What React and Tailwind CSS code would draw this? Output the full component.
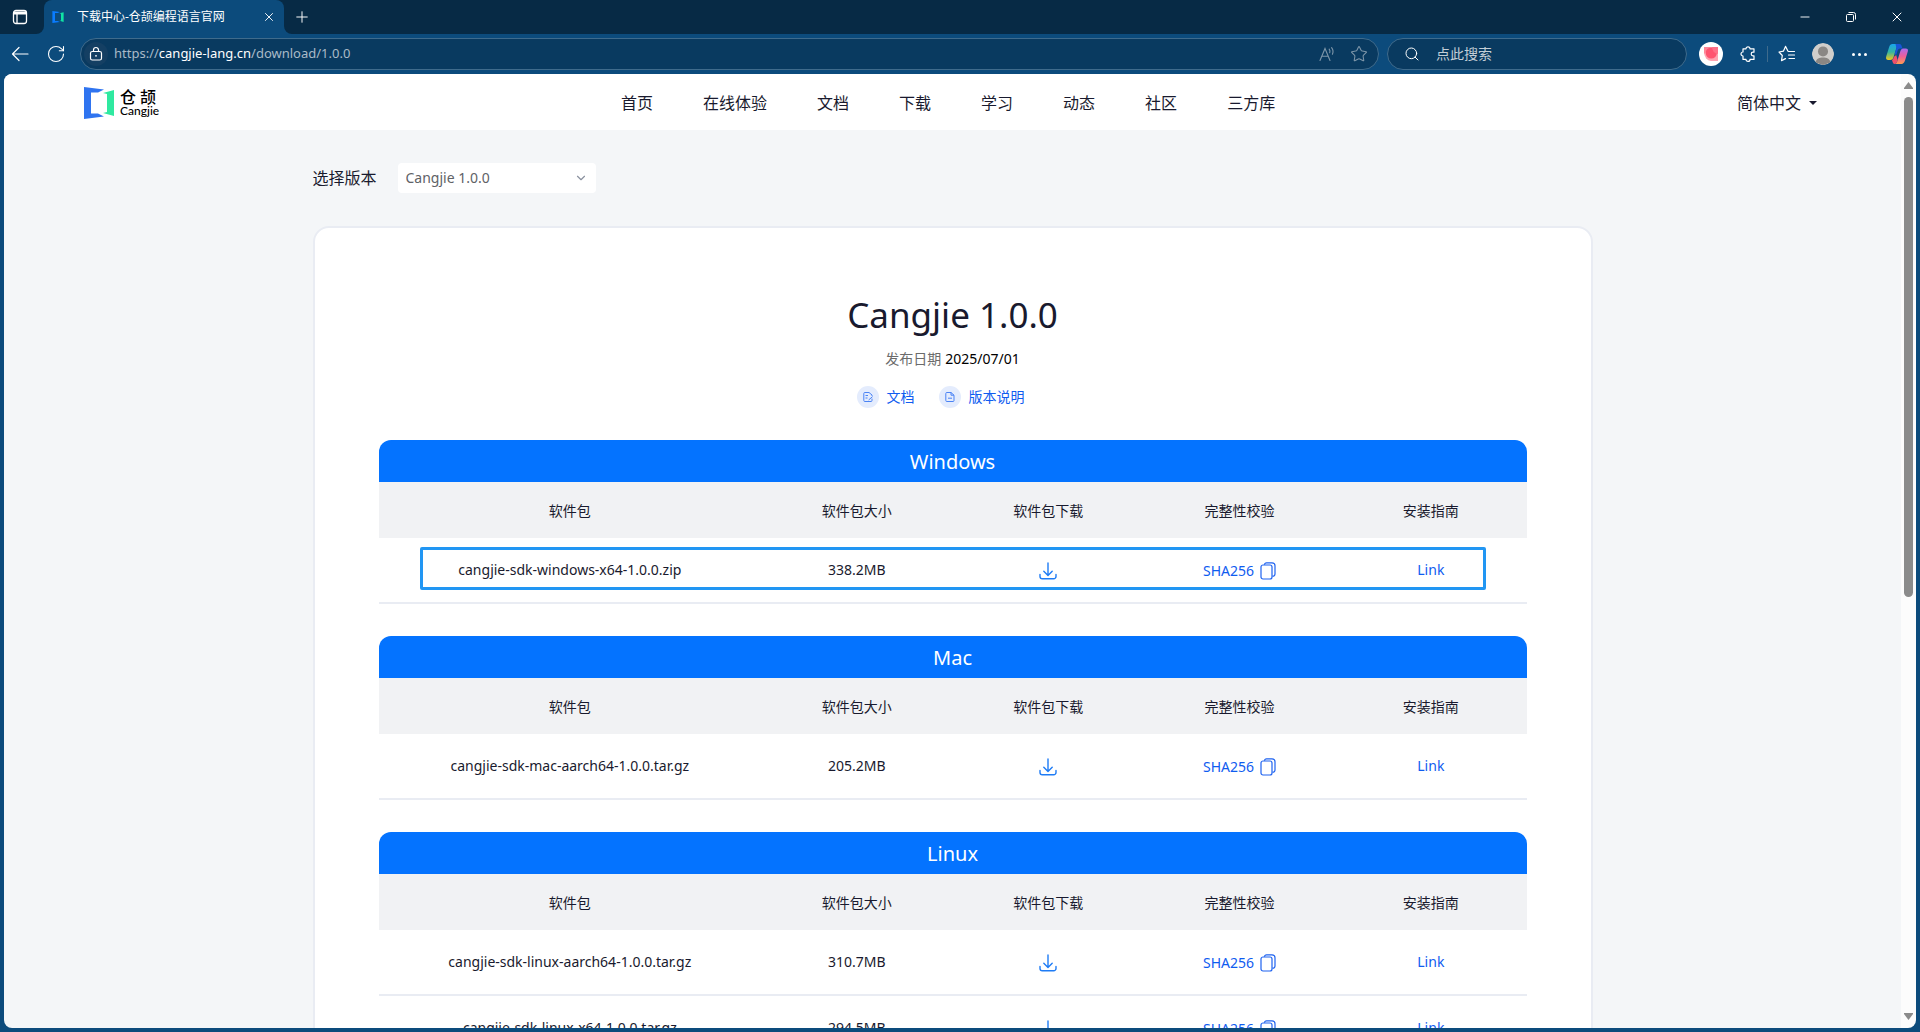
import { useState } from "react";
import { ChevronDown, Minus, Plus, RotateCw, Search, Star, X } from "lucide-react";

const navItems = ["首页", "在线体验", "文档", "下载", "学习", "动态", "社区", "三方库"];

const columns = ["软件包", "软件包大小", "软件包下载", "完整性校验", "安装指南"];

const platforms = [
  {
    name: "Windows",
    highlight: true,
    packages: [{ file: "cangjie-sdk-windows-x64-1.0.0.zip", size: "338.2MB" }],
  },
  {
    name: "Mac",
    packages: [{ file: "cangjie-sdk-mac-aarch64-1.0.0.tar.gz", size: "205.2MB" }],
  },
  {
    name: "Linux",
    packages: [
      { file: "cangjie-sdk-linux-aarch64-1.0.0.tar.gz", size: "310.7MB" },
      { file: "cangjie-sdk-linux-x64-1.0.0.tar.gz", size: "294.5MB" },
    ],
  },
];

function LogoMark({ className, blue = "#2f74f0", green = "#2fe9a0" }) {
  return (
    <svg viewBox="0 0 30 32" className={className} aria-hidden="true">
      <path d="M0 0 L20 2.4 L14 5.4 L7 5.4 L7 26.6 L14 26.6 L20 29.6 L0 32 Z" fill={blue} />
      <path d="M30 3 L30 29 L19 26 L23 25 L23 7 L19 6 Z" fill={green} />
    </svg>
  );
}

function TabActionsIcon() {
  return (
    <svg viewBox="0 0 16 16" className="size-4" fill="none" stroke="currentColor" strokeWidth="1.3" aria-hidden="true">
      <rect x="1.5" y="1.5" width="13" height="13" rx="2.5" />
      <path d="M2 4 H14" strokeWidth="3" />
      <path d="M5 4 V14.5" />
    </svg>
  );
}

function BackIcon() {
  return (
    <svg viewBox="0 0 18 18" className="size-[18px]" fill="none" stroke="currentColor" strokeWidth="1.2" strokeLinecap="round" strokeLinejoin="round" aria-hidden="true">
      <path d="M17 9 H1.5 M8 2.5 L1.5 9 L8 15.5" />
    </svg>
  );
}

function LockIcon() {
  return (
    <svg viewBox="0 0 16 16" className="size-4" fill="none" stroke="currentColor" strokeWidth="1.2" aria-hidden="true">
      <rect x="2.5" y="5.5" width="11" height="8.5" rx="1.8" />
      <path d="M5.5 5.5 V4 a2.5 2.5 0 0 1 5 0 V5.5" />
      <circle cx="8" cy="9.8" r="0.9" fill="currentColor" stroke="none" />
    </svg>
  );
}

function ReadAloudIcon() {
  return (
    <svg viewBox="0 0 18 18" className="size-[18px]" fill="none" stroke="currentColor" strokeWidth="1.1" strokeLinecap="round" aria-hidden="true">
      <path d="M2 15.5 L7 3.5 L12 15.5 M3.8 11.2 H10.2" />
      <path d="M11.2 4.2 q1.3 1.6 0.5 3.6 M13.6 2.6 q2.4 3 0.8 6.6" />
    </svg>
  );
}

function PuzzleIcon() {
  return (
    <svg viewBox="0 0 18 18" className="size-[18px]" fill="none" stroke="currentColor" strokeWidth="1.2" strokeLinejoin="round" aria-hidden="true">
      <path d="M4 3.8 H7 a2 2 0 0 1 4 0 H15 V7.2 H14 a1.8 1.8 0 0 0 0 3.6 H15 V14.4 H11 a2 2 0 0 1 -4 0 H4 V11 a2 2 0 0 1 0 -4 Z" />
    </svg>
  );
}

function FavoritesIcon() {
  return (
    <svg viewBox="0 0 18 18" className="size-[18px]" fill="none" stroke="currentColor" strokeWidth="1.2" strokeLinecap="round" strokeLinejoin="round" aria-hidden="true">
      <path d="M10 6.2 L7.5 1.4 L5.4 6.2 L1 7 L4.3 10.5 L3.5 15.6 L7.5 13.6" />
      <path d="M10.5 6.5 H16.5 M10.5 10 H16.5 M11 13.5 H16.5" />
    </svg>
  );
}

function PinkExtensionIcon() {
  return (
    <svg viewBox="0 0 24 24" className="size-6" aria-hidden="true">
      <circle cx="12" cy="12" r="12" fill="#fff" />
      <path d="M5 5 H19 V19 H12 A7 9 0 0 1 5 10 Z" fill="#ffa3b1" />
      <path d="M5 5 H12 L5 12 Z" fill="#ff8698" />
      <circle cx="12.3" cy="11" r="5.6" fill="#ff5470" />
      <path d="M13 5 H19 V12 A7 7 0 0 1 13 5 Z" fill="#ff7088" />
    </svg>
  );
}

function AvatarIcon() {
  return (
    <svg viewBox="0 0 22 22" className="size-[22px] rounded-full" aria-hidden="true">
      <circle cx="11" cy="11" r="11" fill="#d0cecb" />
      <circle cx="11" cy="8.4" r="5" fill="#8a8784" />
      <path d="M3.5 19.5 C4.5 15.5 7.4 14.6 11 14.6 C14.6 14.6 17.5 15.5 18.5 19.5 L11 22 Z" fill="#8a8784" />
    </svg>
  );
}

function CopilotIcon() {
  return (
    <svg viewBox="0 0 24 24" className="size-6" aria-hidden="true">
      <defs>
        <linearGradient id="copilotLeft" x1="0" y1="0" x2="0" y2="1">
          <stop offset="0" stopColor="#18a5ee" />
          <stop offset="0.5" stopColor="#35b5a0" />
          <stop offset="1" stopColor="#f2c81a" />
        </linearGradient>
        <linearGradient id="copilotRight" x1="0" y1="0" x2="0" y2="1">
          <stop offset="0" stopColor="#a96bf0" />
          <stop offset="0.5" stopColor="#ee5e9a" />
          <stop offset="1" stopColor="#ff9a52" />
        </linearGradient>
      </defs>
      <path d="M7.5 2 H14 C12.5 2.4 12 4 11.4 6 L8.6 15 C7.8 17.4 6.8 18 5 18 H3.2 C1.4 18 0.6 16.6 1.2 14.6 L4 5.4 C4.8 3 5.8 2 7.5 2 Z" fill="url(#copilotLeft)" />
      <path d="M10.5 2 H14.4 C16 2 16.4 3 16.8 4.4 L17.4 6.4 H15.2 C13.6 6.4 13 7.4 12.5 9 L11.2 13 L9.6 12 L11.4 6 Z" fill="#1755d8" />
      <path d="M16.5 22 H10 C11.5 21.6 12 20 12.6 18 L15.4 9 C16.2 6.8 17.2 6.4 19 6.4 H20.8 C22.6 6.4 23.4 7.6 22.8 9.6 L20 18.6 C19.2 21 18.2 22 16.5 22 Z" fill="url(#copilotRight)" />
      <path d="M7 18 C8 17.6 8.6 16 9 14.8 L11.2 13 L12.6 18 C12 20 11.4 22 9.6 22 C8.2 22 7.8 20.6 7 18 Z" fill="#f0506a" />
    </svg>
  );
}

function RestoreIcon() {
  return (
    <svg viewBox="0 0 12 12" className="size-3" fill="none" stroke="currentColor" aria-hidden="true">
      <rect x="1.5" y="3.5" width="7" height="7" rx="1" />
      <path d="M3.5 1.5 H8.5 a2 2 0 0 1 2 2 V8.5" />
    </svg>
  );
}

function DownloadIcon() {
  return (
    <svg viewBox="0 0 18 18" className="size-[18px]" fill="none" stroke="#1f7cf5" strokeWidth="1.4" strokeLinecap="round" strokeLinejoin="round" aria-hidden="true">
      <path d="M9 1 V13 M4.8 9.2 L9 13.4 L13.2 9.2" />
      <path d="M1 12.5 V14.5 a2.3 2.3 0 0 0 2.3 2.3 H14.7 a2.3 2.3 0 0 0 2.3 -2.3 V12.5" />
    </svg>
  );
}

function CopyIcon() {
  return (
    <svg viewBox="0 0 16 18" className="h-[18px] w-4" fill="none" stroke="#1f63f0" strokeWidth="1.2" strokeLinejoin="round" aria-hidden="true">
      <rect x="1" y="3" width="11" height="14" rx="2" />
      <path d="M4.5 2.8 a2 2 0 0 1 2 -2 H12 a3 3 0 0 1 3 3 V12 a2 2 0 0 1 -2.6 2" />
    </svg>
  );
}

function DocIcon({ edit }) {
  return (
    <span className="flex size-[22px] items-center justify-center rounded-full bg-[#e4ecfd]">
      <svg viewBox="0 0 12 12" className="size-3" fill="none" stroke="#4a83f5" strokeLinejoin="round" aria-hidden="true">
        {edit ? (
          <path d="M10 7.6 V9.5 a1 1 0 0 1 -1 1 H2.8 a1 1 0 0 1 -1 -1 V2.5 a1 1 0 0 1 1 -1 H7 L10 4 V5 M3.5 4.5 H6 M3.5 7 H5.5 M6.6 9 L10.6 5.6" />
        ) : (
          <path d="M7 1.5 H2.8 a1 1 0 0 0 -1 1 V9.5 a1 1 0 0 0 1 1 H9 a1 1 0 0 0 1 -1 V4.2 L7 1.5 V4.2 H10 M4 7.2 H8" />
        )}
      </svg>
    </span>
  );
}

function TitleBar() {
  return (
    <div className="flex h-[34px] items-stretch text-white">
      <div className="flex w-11 items-center rounded-br-lg bg-[#072a45] pl-3">
        <button type="button" aria-label="标签操作菜单">
          <TabActionsIcon />
        </button>
      </div>
      {/* The dark corner behind the tab keeps its top edge rounded */}
      <div className="bg-linear-to-b from-[#072a45] from-50% to-transparent to-50%">
        <div className="flex h-full w-60 items-center gap-[13px] rounded-t-lg bg-[#0c4b7c] pr-2 pl-2">
          <LogoMark className="h-3 w-3" blue="#0a7cff" green="#10e3a4" />
          <span className="flex-1 whitespace-nowrap text-xs">下载中心-仓颉编程语言官网</span>
          <button type="button" aria-label="关闭标签页">
            <X className="size-3.5" strokeWidth={1.6} />
          </button>
        </div>
      </div>
      <div className="flex flex-1 items-stretch rounded-bl-lg bg-[#072a45]">
        <button type="button" aria-label="新建标签页" className="flex w-9 items-center justify-center">
          <Plus className="size-[18px]" strokeWidth={1.3} />
        </button>
        <div className="ml-auto flex items-center">
          <button type="button" aria-label="最小化" className="flex w-[46px] justify-center">
            <Minus className="size-3.5" strokeWidth={1.6} />
          </button>
          <button type="button" aria-label="还原" className="flex w-[46px] justify-center">
            <RestoreIcon />
          </button>
          <button type="button" aria-label="关闭" className="flex w-[46px] justify-center">
            <X className="size-4" strokeWidth={1.5} />
          </button>
        </div>
      </div>
    </div>
  );
}

function Toolbar() {
  return (
    <div className="flex h-10 items-center pr-3 pl-[11px] text-white">
      <button type="button" aria-label="返回">
        <BackIcon />
      </button>
      <button type="button" aria-label="刷新" className="ml-[17px]">
        <RotateCw className="size-5" strokeWidth={1.3} />
      </button>

      {/* Address bar */}
      <div className="ml-3.5 flex h-8 flex-1 items-center rounded-full border border-[#3f6b8c] bg-[#093a60] pr-2.5 pl-[3px]">
        <span className="flex size-6 items-center justify-center rounded-full bg-[#143f63]">
          <LockIcon />
        </span>
        <a href="https://cangjie-lang.cn/download/1.0.0" className="ml-1.5 flex-1 text-[13px] text-[#a9bac8]">
          https://<span className="text-white">cangjie-lang.cn</span>/download/1.0.0
        </a>
        <div className="flex items-center gap-3.5 text-[#7e96a9]">
          <button type="button" aria-label="大声朗读">
            <ReadAloudIcon />
          </button>
          <button type="button" aria-label="收藏">
            <Star className="size-[18px]" strokeWidth={1.4} />
          </button>
        </div>
      </div>

      {/* Search box */}
      <label className="ml-2 flex h-8 w-[300px] items-center gap-4 rounded-full border border-[#3f6b8c] bg-[#093a60] px-4">
        <Search className="size-4 shrink-0" strokeWidth={1.5} />
        <input
          type="text"
          placeholder="点此搜索"
          aria-label="点此搜索"
          className="w-full bg-transparent text-sm placeholder-[#c3ced7] outline-none"
        />
      </label>

      <div className="-mr-px ml-3 flex items-center">
        <button type="button" aria-label="扩展程序">
          <PinkExtensionIcon />
        </button>
        <button type="button" aria-label="扩展" className="ml-4">
          <PuzzleIcon />
        </button>
        <span className="ml-2.5 h-4 w-px bg-[#3f6b8c]" />
        <button type="button" aria-label="收藏夹" className="ml-2.5">
          <FavoritesIcon />
        </button>
        <button type="button" aria-label="个人资料" className="ml-4">
          <AvatarIcon />
        </button>
        <button type="button" aria-label="设置及其他" className="ml-[18px] flex gap-[3px]">
          <span className="size-[3px] rounded-full bg-white" />
          <span className="size-[3px] rounded-full bg-white" />
          <span className="size-[3px] rounded-full bg-white" />
        </button>
        <button type="button" aria-label="Copilot" className="ml-[18px]">
          <CopilotIcon />
        </button>
      </div>
    </div>
  );
}

function SiteHeader() {
  return (
    <header className="flex h-14 items-center justify-between bg-white pt-px pr-[84px] pl-20 text-base text-[#191a2e]">
      <a href="#home" className="flex items-center gap-1.5">
        <LogoMark className="h-8 w-[30px]" />
        <span className="flex flex-col text-black">
          <span className="flex gap-1 text-base leading-4 font-medium">
            <span>仓</span>
            <span>颉</span>
          </span>
          <span className="font-[Lato] text-xs leading-3 font-medium">Cangjie</span>
        </span>
      </a>
      <nav className="flex gap-[50px]">
        {navItems.map((item) => (
          <a key={item} href="#nav">
            {item}
          </a>
        ))}
      </nav>
      <button type="button" className="flex items-center gap-2">
        简体中文
        <svg viewBox="0 0 8 4" className="h-1 w-2" fill="currentColor" aria-hidden="true">
          <path d="M0 0 H8 L4 4 Z" />
        </svg>
      </button>
    </header>
  );
}

function PlatformTable({ platform }) {
  return (
    <section className="relative">
      <h2 className="flex h-[42px] items-center justify-center rounded-t-xl bg-[#0473ff] pt-0.5 text-xl text-white">
        {platform.name}
      </h2>
      <table className="w-full table-fixed border-separate border-spacing-0 text-center text-sm text-[#191a2e]">
        <thead>
          <tr className="h-14 bg-[#f1f2f4]">
            {columns.map((column, i) => (
              <th key={column} className={i === 0 ? "w-1/3 pt-0.5 font-normal" : "w-1/6 pt-0.5 font-normal"}>
                {column}
              </th>
            ))}
          </tr>
        </thead>
        <tbody>
          {platform.packages.map((pkg) => (
            <tr key={pkg.file} className="h-[66px]">
              <td className="border-b-2 border-[#e9ecf3]">{pkg.file}</td>
              <td className="border-b-2 border-[#e9ecf3]">{pkg.size}</td>
              <td className="border-b-2 border-[#e9ecf3]">
                <a href="#download" aria-label="下载" className="inline-block align-middle">
                  <DownloadIcon />
                </a>
              </td>
              <td className="border-b-2 border-[#e9ecf3]">
                <button type="button" className="inline-flex items-center gap-1.5 align-middle text-[#0f5cf0]">
                  SHA256
                  <CopyIcon />
                </button>
              </td>
              <td className="border-b-2 border-[#e9ecf3]">
                <a href="#guide" className="text-[#0f5cf0]">
                  Link
                </a>
              </td>
            </tr>
          ))}
        </tbody>
      </table>
      {platform.highlight && (
        <div className="pointer-events-none absolute inset-x-[41px] bottom-3.5 h-[43px] rounded-xs border-3 border-[#2196f3]" />
      )}
    </section>
  );
}

function DownloadPage() {
  const [version, setVersion] = useState("Cangjie 1.0.0");

  return (
    <main className="mx-auto w-full max-w-[1280px] pt-[33px]">
      <div className="flex items-center gap-[21px]">
        <label htmlFor="version" className="text-base text-[#191a2e]">
          选择版本
        </label>
        <div className="relative">
          <select
            id="version"
            value={version}
            onChange={(e) => setVersion(e.target.value)}
            className="h-[30px] w-[198px] appearance-none rounded-sm bg-white px-2 text-sm text-[#606266]"
          >
            <option>Cangjie 1.0.0</option>
          </select>
          <ChevronDown className="pointer-events-none absolute top-2 right-2 size-3.5 text-[#8a919f]" />
        </div>
      </div>

      <div className="mt-[33px] rounded-2xl border-2 border-[#e9ecf3] bg-white p-16">
        <h1 className="pb-1 text-center text-[35px] leading-[46px] text-[#191a2e]">Cangjie 1.0.0</h1>
        <p className="mt-1.5 text-center text-sm leading-[22px] text-black">
          <span className="mr-1 text-[#6b6b6b]">发布日期</span>
          <span>2025/07/01</span>
        </p>
        <div className="mt-4 flex justify-center text-sm leading-[22px] text-[#0f5cf0]">
          <a href="#docs" className="mr-6 flex items-center gap-2">
            <DocIcon edit />
            文档
          </a>
          <a href="#notes" className="mr-6 flex items-center gap-2">
            <DocIcon />
            版本说明
          </a>
        </div>
        <div className="mt-8 flex flex-col gap-8">
          {platforms.map((platform) => (
            <PlatformTable key={platform.name} platform={platform} />
          ))}
        </div>
      </div>
    </main>
  );
}

function Scrollbar() {
  return (
    <div className="flex w-[15px] flex-col items-center bg-[#fcfcfc] py-2 text-[#8b8b8b]" aria-hidden="true">
      <svg viewBox="0 0 9 7" className="h-[7px] w-[9px]" fill="currentColor">
        <path d="M4.5 0 L9 6 V7 H0 V6 Z" />
      </svg>
      <div className="mt-2 h-8/15 w-[9px] rounded-full bg-[#8b8b8b]" />
      <svg viewBox="0 0 9 7" className="mt-auto h-[7px] w-[9px]" fill="currentColor">
        <path d="M4.5 7 L9 1 V0 H0 V1 Z" />
      </svg>
    </div>
  );
}

export default function App() {
  return (
    <div className="flex h-screen flex-col overflow-hidden bg-[#0c4b7c] font-['Noto_Sans','Noto_Sans_CJK_SC',sans-serif]">
      <TitleBar />
      <Toolbar />
      <div className="mx-1 mb-1 flex min-h-0 flex-1 overflow-hidden rounded-lg">
        <div className="min-w-0 flex-1 overflow-hidden bg-[#f4f6f8]">
          <SiteHeader />
          <DownloadPage />
        </div>
        <Scrollbar />
      </div>
    </div>
  );
}
